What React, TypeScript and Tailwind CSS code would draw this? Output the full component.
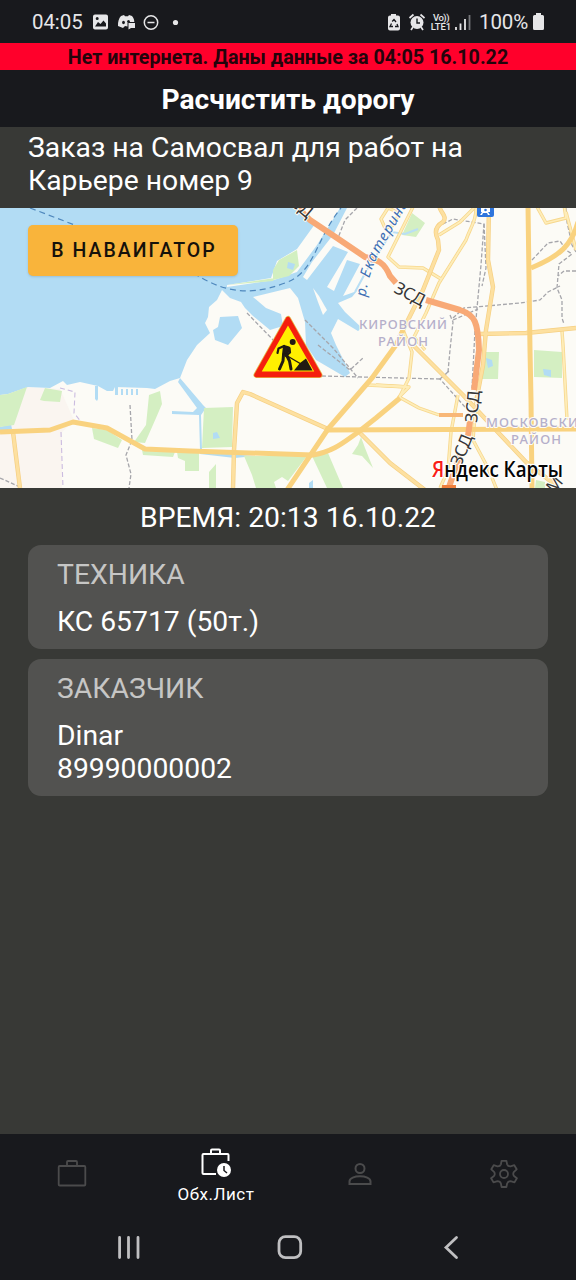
import React from "react";

const ROADS_THIN = [
  "M476 205 C477 220 470 228 466 240 L439 283 L426 313 L414 337 L425 350",
  "M414 205 L388 257 L399 267 L423 268 L441 279",
  "M536 205 L546 223 L566 218 L564 205",
  "M562 331 L563 345 L567 420",
  "M367 385 L408 387",
  "M376 385 L409 387 L399 397 L419 408 L439 415",
  "M458 395 L451 432 L448 470 L440 488",
  "M403 330 L412 352 L409 378 L398 400",
  "M476 402 L473 440 L488 468 L497 490",
  "M392 226 L400 213 L388 208 L381 219 L385 228 Z",
  "M439 235 L460 222 L474 208",
  "M566 212 L576 250",
];
const ROADS_MID = [
  "M489 205 L488 260 L493 287 L486 330 L483 365 L476 402",
  "M439 205 C440 213 448 216 443 222 C436 226 434 232 438 240 L439 250 L423 290 L403 330",
  "M576 328 L526 333 L479 334",
  "M233 488 L234 450 L237 403 L243 392 L250 394 L328 429",
  "M360 433 L390 463 L425 490",
  "M413 345 L443 375 L463 395 L493 427 L526 462 L558 487",
  "M13 432 L20 488",
];
const ROADS_MAIN = [
  "M528 205 L530 350 L531 400 L532 490",
  "M403 330 L396 345 L372 378 L328 429 L287 490",
  "M0 432 L50 430 L73 422 L107 428 L145 449 L190 451 L313 455 C335 451 345 441 357 433 L376 418 L400 398",
  "M325 430 L576 429",
  "M578 222 C572 245 560 256 531 268",
];
const RAILS = [
  "M443 224 L453 219 L484 224 L481 265 L475 330 L472 388",
  "M484 224 L486 268 L482 286",
  "M453 318 L464 308 L520 303 L540 300 L548 292 L560 286",
  "M566 208 L567 222 L572 245 L576 252",
  "M532 260 L548 243 L560 241 L566 250 L572 254 L559 264 L557 288 L562 300 L562 318 L564 324",
  "M576 271 L564 271 L558 276",
  "M450 315 L453 322 L450 350 L448 372 L440 379 L465 407",
  "M453 320 L478 309",
  "M130 405 L132 440 L126 455 L131 474 L129 488",
  "M247 313 L278 345",
  "M305 320 L333 348 L358 378",
  "M318 345 L350 370 L364 357",
  "M322 376 L440 379 L449 371",
  "M0 478 L20 487",
  "M357 208 L345 220 L338 238",
];

const CityMap = () => (
  <svg className="block h-[280px] w-full" viewBox="0 208 576 280">
    <rect x="0" y="208" width="576" height="280" fill="#fcfbf6" />
    <path d="M0 395 L27 387 L60 389 L74 420 L62 432 L62 488 H0Z" fill="#faf5f0" />
    <path
      d="M0 208 H347 L333 235 L312 262 L303 277 L307 280 L333 246 L348 252 L327 287 L334 291 L347 260 L360 264 L343 296 L357 291 L352 297 L338 303 L345 312 L362 328 L358 331 L338 319 L331 333 L336 345 L350 373 L345 377 L316 360 L306 345 L305 322 L298 298 L290 288 L253 297 L266 308 L281 314 L283 326 L270 330 L253 316 L245 308 L241 302 L230 298 L222 290 L217 300 L209 307 L208 317 L205 323 L210 333 L197 345 L187 360 L180 378 L170 381 L155 389 L147 388 L115 387 L113 391 L107 391 L98 386 L80 382 L67 385 L63 381 L50 388 L28 387 L8 394 L0 395Z"
      fill="#b2dcf4"
    />
    <path d="M303 208 L340 208 L327 229 L317 245 L297 272 L274 280 L227 287 L227 285 L271 278 L277 261 L297 249 L315 224 L305 220Z" fill="#fcfbf6" />
    <path d="M297 250 L299 266 L289 276 L273 280 L273 270 L279 260Z M227 285 L275 278 L273 281Z" fill="#d2efc0" />
    <path d="M220 317 L238 316 L242 328 L228 345 L215 340 L213 330 L218 327Z M288 262 L295 264 L293 270 L287 268Z" fill="#b2dcf4" />
    <path d="M313 288 L319 296 L327 310 L323 315 L318 302Z" fill="#fcfbf6" />
    <path d="M180 378 L203 405 L206 408 L201 415 L202 450 L200 450 L199 415 L172 414 V411 L193 412 L197 408 L178 382Z M95 386 h3 v13 l-1 2 l-2 -2Z M115 386 h3 v9 h-3Z M121 389 h2 v6 h-2Z M126 389 h2 v6 h-2Z M131 389 h2 v6 h-2Z M136 389 h2 v6 h-2Z M200 452 L255 456 L235 458 L200 454Z M0 427 L11 424 L12 429 L0 432Z" fill="#b2dcf4" />
    <path d="M0 395 L8 394 L27 387 L14 425 L0 427Z M40 400 L45 388 L62 391 L60 402 L44 401Z M92 428 L107 430 L122 440 L118 448 L94 439Z M149 395 L160 391 L162 404 L156 418 L145 443 L134 442 L146 425Z M142 450 L175 452 L173 457 L143 455Z M177 452 H199 V471 H185 V461 L178 458Z M204 408 L233 407 L232 447 L202 448Z M244 456 L307 456 L288 481 L282 477 L274 482 L276 488 H256 L252 475Z M312 456 L328 453 L343 488 H327Z M209 472 L216 464 V488 H209Z M482 352 H499 L498 379 H482Z M534 350 L562 352 V378 L534 377Z M361 437 L365 448 L373 468 L362 456 L352 454 L358 445Z M412 213 L425 223 L416 237 L402 235Z M536 480 L545 482 V488 H535Z" fill="#d4efc2" />
    <path d="M486 358 l6 2 l1 6 l-5 2Z M543 369 l8 1 v7 l-7 -2Z M213 433 l4 -1 l3 6 l-7 1Z M309 483 l4 -3 v8 h-4Z" fill="#b2dcf4" />
    <path d="M30 208 L88 230 M185 268 C215 287 240 300 285 283 C315 273 315 240 341 208" fill="none" stroke="#4f88bd" strokeWidth="1.2" strokeDasharray="6 4" />
    <path d="M60 388 L75 392 L74 413 L82 423 M61 432 L63 488" fill="none" stroke="#cbbce0" strokeWidth="1.1" strokeDasharray="5 3" />
    <path d="M355 292 L368 268 L392 232 L405 234 L418 229" fill="none" stroke="#b9dff5" strokeWidth="2" />

    <g fill="none" stroke="#a6a6ab" strokeWidth="1.3" strokeDasharray="4 2">
      {RAILS.map((d) => <path key={d} d={d} />)}
    </g>
    <g fill="none" strokeLinejoin="round">
      <g stroke="#f7d78c" strokeWidth="3.4">{ROADS_THIN.map((d) => <path key={d} d={d} />)}</g>
      <g stroke="#feedb9" strokeWidth="1.8">{ROADS_THIN.map((d) => <path key={d} d={d} />)}</g>
      <g stroke="#f6d083" strokeWidth="4.4">{ROADS_MID.map((d) => <path key={d} d={d} />)}</g>
      <g stroke="#fde0a0" strokeWidth="3">{ROADS_MID.map((d) => <path key={d} d={d} />)}</g>
      <g stroke="#f9d27f" strokeWidth="5">{ROADS_MAIN.map((d) => <path key={d} d={d} />)}</g>
      <path d="M439 415 H463" stroke="#f8b777" strokeWidth="4" />
      <path d="M297 207 L310 220 L337 238 L365 257 C378 260 384 262 390 276 L396 283 M426 300 L460 310 C475 315 478 322 479 350 L474 390 M470 421 L468 436 M460 455 L448 490" stroke="#f8a976" strokeWidth="6" />
    </g>
    <path d="M442 485 h14 v3 h-14Z" fill="#ef7f3c" />

    <rect x="477" y="202" width="17" height="15" rx="2" fill="#2f75dc" />
    <path d="M481 206 h9 v6 h-2 l2 3 h-2 l-1 -2 h-4 l-1 2 h-2 l2 -3 h-1Z" fill="#fff" />
    <circle cx="485.500" cy="210" r="1.300" fill="#2f75dc" />

    <g className="font-[Noto_Sans,sans-serif]" paintOrder="stroke" stroke="#fcfbf6" strokeWidth="2">
      <g fill="#b5afca" fontSize="13" fontWeight="500">
        <text x="359" y="328.500" textLength="88">КИРОВСКИЙ</text>
        <text x="378" y="345.500" textLength="50">РАЙОН</text>
        <text x="486" y="427" textLength="92">МОСКОВСКИ</text>
        <text x="511" y="444" textLength="50">РАЙОН</text>
      </g>
      <g fill="#353535" fontSize="17">
        <text transform="translate(393 292) rotate(27)" textLength="32">ЗСД</text>
        <text transform="translate(477 423) rotate(-85)" textLength="32">ЗСД</text>
        <text transform="translate(461 467) rotate(-68)" textLength="32">ЗСД</text>
        <text transform="translate(281 197) rotate(40)" textLength="34">ЗСД</text>
        <text transform="translate(554 494) rotate(-50)">М</text>
      </g>
      <path id="river" d="M366 297 C367 282 372 267 380 252 L412 197" fill="none" stroke="none" />
      <text fill="#3c6fb4" fontSize="14.500" fontStyle="italic" letterSpacing="1.200">
        <textPath href="#river">р. Екатеринг</textPath>
      </text>
    </g>

    <g strokeLinejoin="round">
      <path d="M288 319 L256.500 375 H319.500Z" fill="#fff000" stroke="#e4b64a" strokeWidth="6" />
      <path d="M288 319 L256.500 375 H319.500Z" fill="#fff000" stroke="#f51f0e" strokeWidth="4.500" />
      <path d="M288 323.500 L260 372.500 H316Z" fill="#fff000" stroke="#f51f0e" strokeWidth="2" />
    </g>
    <g fill="#211a12" stroke="#211a12" strokeLinecap="round" strokeLinejoin="round">
      <circle cx="292.700" cy="342" r="3" stroke="none" />
      <path d="M284 346 L289 347.500 L287.500 354 L283 354.500Z" strokeWidth="2" />
      <path d="M284 346 L278.500 348.500 L277.500 353 M289.500 348 L290 352.500 L286 356" fill="none" strokeWidth="2.200" />
      <path d="M283.500 355 L283 361 L279.500 369 M286.500 355 L289.500 361 L291 369" fill="none" strokeWidth="3" />
      <path d="M284 354 L301 364" fill="none" strokeWidth="1.400" />
      <path d="M294 370.500 L300 363 L306 358.500 L312.500 370.500Z" stroke="none" />
    </g>
    <text x="432" y="476.500" className="font-[Open_Sans,sans-serif]" fontSize="21.500" fontWeight="600" textLength="131" lengthAdjust="spacingAndGlyphs" paintOrder="stroke" stroke="#ffffff" strokeWidth="2.500">
      <tspan fill="#fa1e18">Я</tspan><tspan fill="#050505">ндекс Карты</tspan>
    </text>
  </svg>
);

const StatusBar = () => (
  <div className="flex h-[43px] items-center justify-between pr-8 pl-8 text-[#e6e6e8]">
    <div className="flex items-center">
      <span className="w-[52px] text-[20.5px] leading-6 tracking-[-0.1px] whitespace-nowrap">04:05</span>
      <svg className="ml-2 h-4 w-[90px]" viewBox="0 0 90 16">
        <path fillRule="evenodd" fill="currentColor" d="M3 .5h11a2 2 0 0 1 2 2v11a2 2 0 0 1-2 2H3a2 2 0 0 1-2-2v-11a2 2 0 0 1 2-2ZM3 12.500h11V9.500L11.500 6.500 8.500 10 6 8ZM5.200 3a1.500 1.500 0 1 0 0 3 1.500 1.500 0 0 0 0-3Z" />
        <path fill="currentColor" d="M29 2l3-1 1 1.200h3L37 1l3 1c1.700 2 2.300 4 2.300 6H37V9h-1.500v3.500L33 12l-2 2-5-2c-.3-4 1-8 3-10Z" />
        <ellipse cx="31.500" cy="8.500" rx="1.400" ry="1.700" fill="#18191d" />
        <ellipse cx="36.500" cy="7.500" rx="1.400" ry="1.500" fill="#18191d" />
        <path fill="currentColor" d="M36.500 9h6.500v5h-4l-2.500 1.500Z" />
        <circle cx="59" cy="8.500" r="6.700" fill="none" stroke="currentColor" strokeWidth="1.500" />
        <path d="M55.500 8.500h7" stroke="currentColor" strokeWidth="1.500" />
        <circle cx="83.500" cy="8.500" r="2.600" fill="currentColor" />
      </svg>
    </div>
    <div className="flex items-center">
      <svg className="h-[18px] w-10" viewBox="0 0 40 18">
        <path d="M6 1h5v1.500h2a2 2 0 0 1 2 2v11a2 2 0 0 1-2 2H5a2 2 0 0 1-2-2v-11a2 2 0 0 1 2-2h1Z" fill="currentColor" />
        <path d="M7.200 8.500L9 6.500l2 2.500M12 11l1 2.500h-3M8 13.500H5l1.500-3" fill="none" stroke="#18191d" strokeWidth="1.300" />
        <circle cx="32" cy="9.500" r="6.500" fill="currentColor" />
        <path d="M24.500 5l4-3.500M39.500 5l-4-3.500M28 14l-2 3M36 14l2 3" stroke="currentColor" strokeWidth="1.700" />
        <path d="M32 5.500v4.500h3" fill="none" stroke="#18191d" strokeWidth="1.400" />
      </svg>
      <div className="ml-1 flex w-[24px] flex-col items-center text-[9.5px] leading-[9px] font-medium">
        <span className="tracking-tighter">Vo))</span>
        <span>LTE1</span>
      </div>
      <svg className="ml-0.5 h-4 w-4" viewBox="0 0 16 16">
        <path d="M1 13v3M5.500 9.500V16M10 5v11" stroke="currentColor" strokeWidth="1.800" />
        <path d="M14.500 1v15" stroke="#77787c" strokeWidth="1.800" />
      </svg>
      <span className="ml-2 w-[51px] text-[20.5px] leading-6 tracking-[-0.1px] whitespace-nowrap">100%</span>
      <svg className="ml-[3px] h-[17px] w-[11px]" viewBox="0 0 11 17">
        <path d="M3 0h5v2h1.500A1.500 1.500 0 0 1 11 3.500v12A1.500 1.500 0 0 1 9.500 17h-8A1.500 1.500 0 0 1 0 15.500v-12A1.500 1.500 0 0 1 1.500 2H3Z" fill="currentColor" />
      </svg>
    </div>
  </div>
);

const Card = ({ title, children }: { title: string; children: React.ReactNode }) => (
  <section className="rounded-[13px] bg-[#525250] px-[29px] pt-[13px] pb-[11px] text-[28.3px] leading-[33px]">
    <h2 className="mb-[14px] text-[#c6c6c5]">{title}</h2>
    {children}
  </section>
);

export default function App() {
  return (
    <div className="flex h-[1280px] w-[576px] flex-col overflow-hidden bg-[#383936] font-[Roboto,sans-serif] text-white">
      <header className="bg-[#18191d]">
        <StatusBar />
        <div className="flex h-[27px] items-center justify-center bg-[#ff002b] pt-[2px] text-[19.7px] leading-6 font-bold whitespace-nowrap text-[#24040b]">
          Нет интернета. Даны данные за 04:05 16.10.22
        </div>
        <h1 className="flex h-[57px] items-center justify-center pt-1 text-[28.2px] font-bold">Расчистить дорогу</h1>
      </header>
      <p className="h-[81px] px-7 pt-[4px] text-[28.3px] leading-[33px] whitespace-nowrap">
        Заказ на Самосвал для работ на<br />Карьере номер 9
      </p>
      <div className="relative h-[280px]">
        <CityMap />
        <button className="absolute top-[17px] left-7 h-[51px] w-[210px] rounded-[5px] bg-[#f9b43b] pt-px pl-[2px] text-[19.5px] font-medium tracking-[2px] whitespace-nowrap text-[#15110b] shadow">
          В НАВАИГАТОР
        </button>
      </div>
      <main className="flex-1 px-7">
        <p className="h-[57px] pt-[13px] text-center text-[28.3px] leading-[33px]">ВРЕМЯ: 20:13 16.10.22</p>
        <div className="flex flex-col gap-[10px]">
          <Card title="ТЕХНИКА"><p>КС 65717 (50т.)</p></Card>
          <Card title="ЗАКАЗЧИК"><p>Dinar</p><p>89990000002</p></Card>
        </div>
      </main>
      <footer className="h-[146px] bg-[#18191d]">
        <nav className="grid h-20 grid-cols-4 text-[#4b4b4c]">
          <div className="flex items-center justify-center">
            <svg className="h-8 w-8" viewBox="0 0 32 32" fill="none" stroke="currentColor" strokeWidth="1.800">
              <rect x="2.700" y="8" width="26.600" height="19.500" rx="1" />
              <path d="M11 8V4a1 1 0 0 1 1-1h8a1 1 0 0 1 1 1V8" />
            </svg>
          </div>
          <div className="flex flex-col items-center pt-[11px] text-white">
            <svg className="h-8 w-8" viewBox="0 0 32 32" fill="none" stroke="currentColor" strokeWidth="2">
              <path d="M16 29H3.500a1 1 0 0 1-1-1V10a1 1 0 0 1 1-1h24a1 1 0 0 1 1 1v6M11 9V5.500a1 1 0 0 1 1-1h7a1 1 0 0 1 1 1V9" />
              <circle cx="24" cy="25" r="7" fill="currentColor" stroke="none" />
              <path d="M24 21v4.500l3 2.500" stroke="#18191d" strokeWidth="1.500" />
            </svg>
            <span className="mt-[7px] text-[17px] leading-5 tracking-[0.5px]">Обх.Лист</span>
          </div>
          <div className="flex items-center justify-center">
            <svg className="h-8 w-8" viewBox="0 0 32 32" fill="none" stroke="currentColor" strokeWidth="2">
              <circle cx="16" cy="10.500" r="4.500" />
              <path d="M5.500 26v-2.500c0-7 21-7 21 0V26Z" />
            </svg>
          </div>
          <div className="flex items-center justify-center">
            <svg className="h-8 w-8" viewBox="0 0 32 32" fill="none" stroke="currentColor" strokeWidth="1.800" strokeLinejoin="round">
              <path d="M13.600 2.800H18.400L19.100 6.300Q20 8.500 22.500 8.300L26.300 7.200L28.700 11.300L26 13.800Q24.500 16 26 18L28.900 20.200L26.500 24.400L22.500 23.200Q20 23.200 19.100 25.500L18.400 29H13.600L12.900 25.500Q12 23.200 9.500 23.200L5.500 24.400L3.100 20.200L6 18Q7.500 16 6 13.800L3.300 11.300L5.700 7.200L9.500 8.300Q12 8.500 12.900 6.300Z" />
              <circle cx="16" cy="16" r="4" />
            </svg>
          </div>
        </nav>
        <div className="flex h-[66px] justify-center text-[#bfbfc1]">
          <svg className="h-[66px] w-[576px]" viewBox="0 1214 576 66" fill="none" stroke="currentColor" strokeWidth="2.800" strokeLinecap="round">
            <path d="M119.600 1237.500V1257.500M128.500 1237.500V1257.500M138 1237.500V1257.500" />
            <rect x="279" y="1236.700" width="21.700" height="21" rx="6.500" />
            <path d="M456.500 1237.500L446 1247.500L456.500 1257.500" />
          </svg>
        </div>
      </footer>
    </div>
  );
}
